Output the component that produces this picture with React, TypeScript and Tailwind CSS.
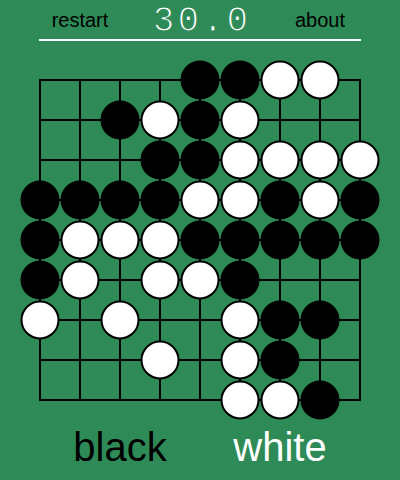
const BOARD = [
  '....BBWW.',
  '..BWBW...',
  '...BBWWWW',
  'BBBBWWBWB',
  'BWWWBBBBB',
  'BW.WWB...',
  'W.W..WBB.',
  '...W.WB..',
  '.....WWB.',
]

const SIZE = 9
const STEP = 40
const LEFT = 40
const TOP = 80

function Board() {
  const idx = Array.from({ length: SIZE }, (_, i) => i * STEP)
  const span = (SIZE - 1) * STEP
  return (
    <svg width={400} height={360} viewBox="0 60 400 360" className="block">
      {idx.map(d => (
        <g key={d} stroke="#000" strokeWidth={2}>
          <line x1={LEFT - 1} y1={TOP + d} x2={LEFT + span + 1} y2={TOP + d} />
          <line x1={LEFT + d} y1={TOP - 1} x2={LEFT + d} y2={TOP + span + 1} />
        </g>
      ))}
      {BOARD.map((row, r) =>
        row.split('').map((c, col) => {
          if (c === '.') return null
          return (
            <circle
              key={`${r}-${col}`}
              cx={LEFT + col * STEP}
              cy={TOP + r * STEP}
              r={18.5}
              fill={c === 'B' ? '#000' : '#fff'}
              stroke="#000"
              strokeWidth={2}
            />
          )
        }),
      )}
    </svg>
  )
}

export default function App() {
  return (
    <div className="h-screen w-[400px] bg-[#2e8b57] font-['Liberation_Sans',Arial,sans-serif]">
      <div className="mx-[39px] flex h-[41px] border-b-2 border-white">
        <button className="mt-[10px] h-[20px] w-[82px] text-center text-[20px] leading-none text-black">
          restart
        </button>
        <div className="mt-[4px] flex-1 pl-[4px] text-center font-['Liberation_Mono',monospace] text-[36px] leading-none tracking-[3px] text-white [-webkit-text-stroke:1.2px_#2e8b57]">
          30.0
        </div>
        <button className="mt-[10px] h-[20px] w-[82px] text-center text-[20px] leading-none text-black">
          about
        </button>
      </div>
      <div className="mt-[19px]">
        <Board />
      </div>
      <div className="mx-[40px] mt-[7px] flex text-[40px] leading-none">
        <div className="flex-1 text-center text-black">black</div>
        <div className="flex-1 text-center text-white">white</div>
      </div>
    </div>
  )
}
